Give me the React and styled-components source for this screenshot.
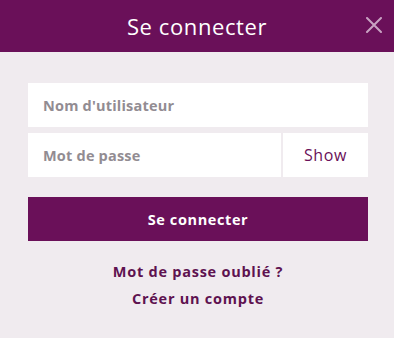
import React from 'react';
import styled, { createGlobalStyle } from 'styled-components';

const Global = createGlobalStyle`
  html, body { margin: 0; padding: 0; background: #f0ebef; }
  body { font-family: "Open Sans", "Liberation Sans", sans-serif; }
`;

const purple = '#6a1059';

const Modal = styled.div`
  width: 394px;
  height: 338px;
  background: #f0ebef;
  display: flex;
  flex-direction: column;
`;

const Header = styled.div`
  position: relative;
  height: 52px;
  background: ${purple};
  display: flex;
  align-items: center;
  justify-content: center;
`;

const Title = styled.h1`
  margin: 0;
  color: #fff;
  font-size: 22px;
  font-weight: 400;
  letter-spacing: 0.6px;
`;

const Close = styled.button`
  position: absolute;
  right: 11px;
  top: 16px;
  width: 18px;
  height: 18px;
  padding: 0;
  border: 0;
  background: none;
  display: flex;
  align-items: center;
  justify-content: center;
  cursor: pointer;
`;

const Body = styled.div`
  padding: 31px 26px 0 28px;
  display: flex;
  flex-direction: column;
`;

const Field = styled.div`
  height: 44px;
  display: flex;
  gap: 2px;
  margin-bottom: ${p => p.$mb || 0}px;
`;

const Input = styled.input`
  flex: 1;
  min-width: 0;
  height: 44px;
  box-sizing: border-box;
  border: 0;
  background: #fff;
  padding: 0 15px;
  font-family: inherit;
  font-size: 14.5px;
  font-weight: 700;
  letter-spacing: 0.2px;
  outline: none;
  &::placeholder { color: #928c92; }
`;

const Show = styled.button`
  width: 85px;
  height: 44px;
  border: 0;
  background: #fff;
  color: ${purple};
  font-family: inherit;
  font-size: 16px;
  letter-spacing: 0.6px;
  cursor: pointer;
`;

const Submit = styled.button`
  height: 44px;
  border: 0;
  background: ${purple};
  color: #fff;
  font-family: inherit;
  font-size: 14.5px;
  font-weight: 700;
  letter-spacing: 0.6px;
  cursor: pointer;
`;

const Links = styled.div`
  display: flex;
  flex-direction: column;
  align-items: center;
  gap: 8px;
  padding-top: 21px;
`;

const Link = styled.a`
  color: #5e1250;
  font-size: 14.5px;
  font-weight: 700;
  letter-spacing: 0.75px;
  line-height: 19px;
  text-decoration: none;
  cursor: pointer;
`;

export default function App() {
  return (
    <Modal>
      <Global />
      <Header>
        <Title>Se connecter</Title>
        <Close aria-label="Fermer">
          <svg width="16" height="16" viewBox="0 0 16 16">
            <path d="M1 1L15 15M15 1L1 15" stroke="#c8a2c2" strokeWidth="2" strokeLinecap="round" />
          </svg>
        </Close>
      </Header>
      <Body>
        <Field $mb={6}>
          <Input placeholder="Nom d'utilisateur" />
        </Field>
        <Field $mb={20}>
          <Input type="password" placeholder="Mot de passe" />
          <Show>Show</Show>
        </Field>
        <Submit>Se connecter</Submit>
        <Links>
          <Link>Mot de passe oublié ?</Link>
          <Link>Créer un compte</Link>
        </Links>
      </Body>
    </Modal>
  );
}
